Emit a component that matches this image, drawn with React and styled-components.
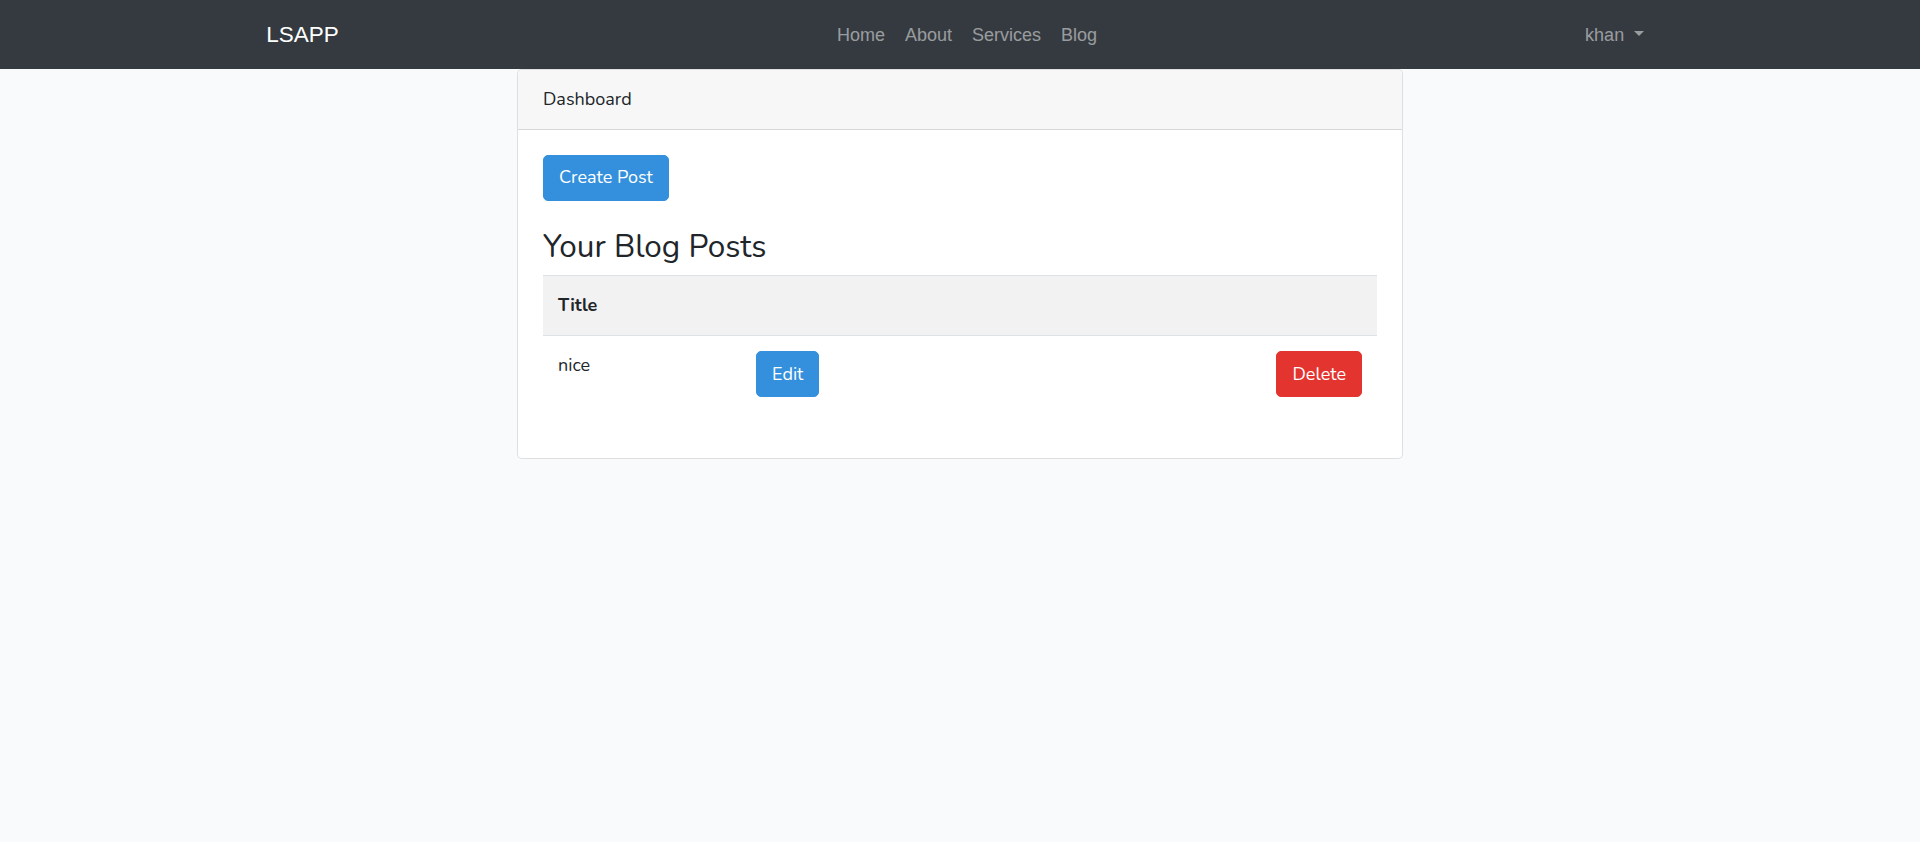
import React from 'react';
import styled, { createGlobalStyle } from 'styled-components';

const GlobalStyle = createGlobalStyle`
    * {
        box-sizing: border-box;
    }

    body {
        margin: 0;
        background-color: #f8fafc;
        font-family: "Nunito", "Lato", sans-serif;
        font-size: 18px;
        line-height: 28.8px;
        color: #212529;
    }
`;

const Styled = {
    Navbar: styled.nav`
        width: 100%;
        height: 69px;
        background-color: #343a40;
    `,

    NavInner: styled.div`
        display: flex;
        align-items: center;
        max-width: 1425px;
        height: 100%;
        margin: 0 auto;
        padding: 0 18.75px;
        font-family: "Liberation Sans", Arial, sans-serif;
    `,

    Brand: styled.a`
        margin-right: 20px;
        font-size: 22.5px;
        line-height: 30px;
        color: #ffffff;
        text-decoration: none;
    `,

    NavList: styled.ul`
        display: flex;
        list-style: none;
        margin: ${({ centered }) => (centered ? '0 auto' : '0')};
        padding: 0;
    `,

    NavLink: styled.a`
        display: block;
        padding: 0 10px;
        font-size: 18px;
        line-height: 28px;
        color: rgba(255, 255, 255, 0.5);
        text-decoration: none;
    `,

    Caret: styled.span`
        display: inline-block;
        margin-left: 4.6px;
        vertical-align: 4.6px;
        border-top: 5.4px solid rgba(255, 255, 255, 0.5);
        border-left: 5.4px solid transparent;
        border-right: 5.4px solid transparent;
    `,

    Main: styled.main`
        display: flex;
        justify-content: center;
    `,

    Card: styled.div`
        width: 886px;
        background-color: #ffffff;
        border: 1px solid rgba(0, 0, 0, 0.125);
        border-radius: 5px;
    `,

    CardHeader: styled.div`
        padding: 15px 25px;
        background-color: rgba(0, 0, 0, 0.03);
        border-bottom: 1px solid rgba(0, 0, 0, 0.125);
        border-radius: 5px 5px 0 0;
    `,

    CardBody: styled.div`
        display: flex;
        flex-direction: column;
        align-items: flex-start;
        padding: 25px;
    `,

    Button: styled.a`
        display: inline-block;
        margin: 0;
        padding: 7.5px 15px;
        font-family: inherit;
        font-size: 18px;
        line-height: 28.8px;
        color: #ffffff;
        text-decoration: none;
        background-color: ${({ variant }) => (variant === 'danger' ? '#e3342f' : '#3490dc')};
        border: 1px solid ${({ variant }) => (variant === 'danger' ? '#e3342f' : '#3490dc')};
        border-radius: 5px;
        cursor: pointer;
    `,

    Heading: styled.h3`
        margin: 27px 0 10px;
        font-size: 31.5px;
        font-weight: 400;
        line-height: 37.8px;
    `,

    Table: styled.table`
        width: 100%;
        margin-bottom: 21px;
        border-collapse: collapse;
    `,

    Row: styled.tr`
        background-color: ${({ striped }) => (striped ? 'rgba(0, 0, 0, 0.05)' : 'transparent')};
    `,

    Cell: styled.td`
        width: ${({ width }) => width || 'auto'};
        padding: 15px;
        text-align: ${({ align }) => align || 'left'};
        vertical-align: top;
        font-weight: ${({ head }) => (head ? 700 : 400)};
        border-top: 1px solid #dee2e6;
    `,
};

function App() {
    const posts = [{ id: 1, title: 'nice' }];

    return (
        <>
            <GlobalStyle />
            <Styled.Navbar>
                <Styled.NavInner>
                    <Styled.Brand href="#">LSAPP</Styled.Brand>
                    <Styled.NavList centered>
                        <li><Styled.NavLink href="#">Home</Styled.NavLink></li>
                        <li><Styled.NavLink href="#">About</Styled.NavLink></li>
                        <li><Styled.NavLink href="#">Services</Styled.NavLink></li>
                        <li><Styled.NavLink href="#">Blog</Styled.NavLink></li>
                    </Styled.NavList>
                    <Styled.NavList>
                        <li>
                            <Styled.NavLink href="#">
                                khan <Styled.Caret />
                            </Styled.NavLink>
                        </li>
                    </Styled.NavList>
                </Styled.NavInner>
            </Styled.Navbar>
            <Styled.Main>
                <Styled.Card>
                    <Styled.CardHeader>Dashboard</Styled.CardHeader>
                    <Styled.CardBody>
                        <Styled.Button href="#">Create Post</Styled.Button>
                        <Styled.Heading>Your Blog Posts</Styled.Heading>
                        <Styled.Table>
                            <tbody>
                                <Styled.Row striped>
                                    <Styled.Cell as="th" head width="198px">Title</Styled.Cell>
                                    <Styled.Cell as="th" head></Styled.Cell>
                                    <Styled.Cell as="th" head width="113px"></Styled.Cell>
                                </Styled.Row>
                                {posts.map((post) => (
                                    <Styled.Row key={post.id}>
                                        <Styled.Cell>{post.title}</Styled.Cell>
                                        <Styled.Cell>
                                            <Styled.Button href="#">Edit</Styled.Button>
                                        </Styled.Cell>
                                        <Styled.Cell align="right">
                                            <Styled.Button as="button" variant="danger">Delete</Styled.Button>
                                        </Styled.Cell>
                                    </Styled.Row>
                                ))}
                            </tbody>
                        </Styled.Table>
                    </Styled.CardBody>
                </Styled.Card>
            </Styled.Main>
        </>
    );
}

export default App;
